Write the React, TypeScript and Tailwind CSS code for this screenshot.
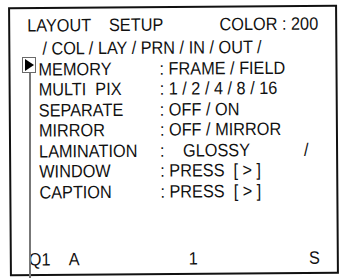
import React from "react";

const rows: { label: string; value: React.ReactNode }[] = [
  { label: "MEMORY", value: ": FRAME / FIELD" },
  { label: "MULTI  PIX", value: ": 1 / 2 / 4 / 8 / 16" },
  { label: "SEPARATE", value: ": OFF / ON" },
  { label: "MIRROR", value: ": OFF / MIRROR" },
  {
    label: "LAMINATION",
    value: (
      <span className="flex">
        <span className="w-[23px]">:</span>
        <span className="w-[121px]">GLOSSY</span>
        <span>/</span>
      </span>
    ),
  },
  { label: "WINDOW", value: ": PRESS  [ > ]" },
  { label: "CAPTION", value: ": PRESS  [ > ]" },
];

export default function App() {
  return (
    <div
      className="relative h-[278px] w-[343px] overflow-hidden bg-white text-[16.3px] leading-[20.5px] text-[#111]"
      style={{ fontFamily: '"Liberation Sans", Arial, sans-serif' }}
    >
      <div className="ml-[9px] mt-[6px] flex h-[269px] w-[329px] -rotate-[0.4deg] flex-col border-2 border-[#111] pl-[17px] pr-[17px] pt-[6px]">
        <div className="flex scale-y-[1.1] justify-between whitespace-pre">
          <span>LAYOUT    SETUP</span>
          <span>COLOR : 200</span>
        </div>
        <div className="mt-[2.5px] scale-y-[1.1] whitespace-pre pl-[15px]">/ COL / LAY / PRN / IN / OUT /</div>
        <div className="flex flex-col pl-[11px]">
          {rows.map((r) => (
            <div key={r.label} className="flex scale-y-[1.1] whitespace-pre">
              <span className="w-[121px]">{r.label}</span>
              <span>{r.value}</span>
            </div>
          ))}
        </div>
        <div className="mt-auto mb-[5px] flex scale-y-[1.1] whitespace-pre">
          <span className="w-[40px]">Q1</span>
          <span className="w-[120px]">A</span>
          <span className="flex-1">1</span>
          <span>S</span>
        </div>
      </div>

      {/* cursor marker */}
      <div className="absolute left-[22px] top-[57px] flex h-[16px] w-[14px] items-center justify-center border-[1.5px] border-[#6a6a6a] bg-white">
        <span className="block h-0 w-0 border-y-[6px] border-l-[9px] border-y-transparent border-l-black" />
      </div>
      <div className="absolute left-[29px] top-[73px] h-[205px] w-[1.5px] bg-[#777]" />
    </div>
  );
}
